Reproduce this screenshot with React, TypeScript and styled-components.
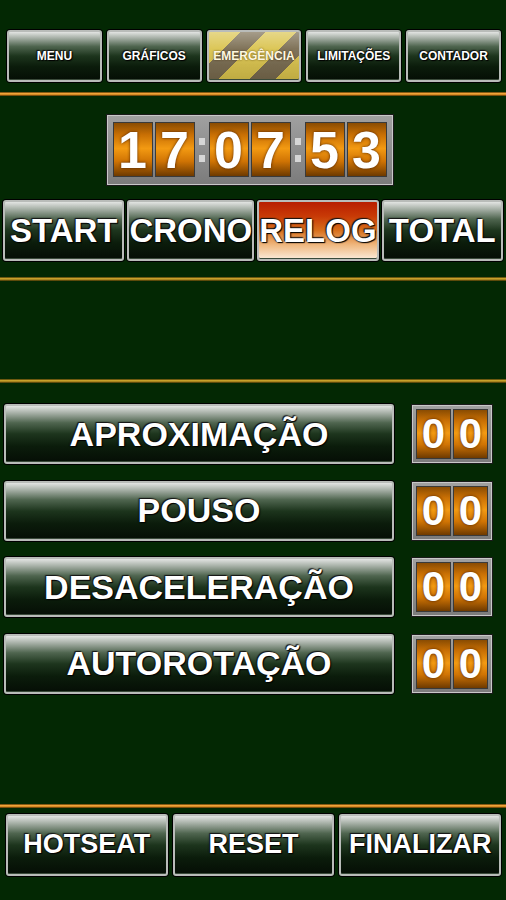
import React from "react";
import styled, { createGlobalStyle, css } from "styled-components";

const Global = createGlobalStyle`
  html, body { margin: 0; padding: 0; background: #032803; }
  body { font-family: "Liberation Sans", Arial, sans-serif; }
  * { box-sizing: border-box; }
`;

const Page = styled.div`
  width: 506px;
  height: 900px;
  background: #032803;
  display: flex;
  flex-direction: column;
  padding-top: 30px;
  overflow: hidden;
`;

const glossBg = css`
  background: linear-gradient(
    to bottom,
    #e2e4e2 0%,
    #a9b2a9 12%,
    #4f654f 30%,
    #1d351d 50%,
    #0b1c0b 72%,
    #050e05 100%
  );
`;

type Variant = "normal" | "hazard" | "active";

const Btn = styled.div<{ $variant?: Variant; $size: number }>`
  flex: 1;
  display: flex;
  align-items: center;
  justify-content: center;
  border: 2px solid #b9bcb9;
  border-radius: 3px;
  box-shadow: 0 0 0 1px #000, inset 0 -1px 0 #3a4a3a;
  color: #fff;
  font-weight: 700;
  font-size: ${(p) => p.$size}px;
  white-space: nowrap;
  text-shadow: 0 0 2px #000, 1px 1px 1px #000, -1px -1px 1px #1a1a1a;
  ${(p) =>
    p.$variant === "hazard"
      ? css`
          color: #fff8e0;
          text-shadow: 0 0 2px rgba(60, 40, 0, 0.8);
          background: linear-gradient(to bottom, rgba(255,255,255,0.35) 0%, rgba(255,255,255,0.08) 35%, rgba(0,0,0,0.12) 100%),
            repeating-linear-gradient(135deg, #d9c24a 0px, #d9c24a 22px, #76684c 22px, #76684c 40px);
        `
      : p.$variant === "active"
      ? css`
          background: linear-gradient(to bottom, #b81e00 0%, #c83a06 25%, #d8701c 50%, #efb77e 75%, #fbead8 100%);
        `
      : glossBg}
`;

const TopNav = styled.div`
  display: flex;
  gap: 5px;
  height: 52px;
  padding: 0 5px 0 7px;
`;

const Separator = styled.div<{ $top: number; $tone: "orange" | "gold" }>`
  margin-top: ${(p) => p.$top}px;
  height: 4px;
  flex-shrink: 0;
  background: ${(p) =>
    p.$tone === "orange"
      ? "linear-gradient(to bottom, #4a3000 0%, #f2a53a 35%, #d08420 70%, #3a2600 100%)"
      : "linear-gradient(to bottom, #3a3000 0%, #c9a32c 35%, #a07e1c 70%, #2e2600 100%)"};
`;

const ClockWrap = styled.div`
  margin-top: 19px;
  display: flex;
  justify-content: center;
  padding-right: 7px;
`;

const Frame = styled.div<{ $pad: string }>`
  display: flex;
  align-items: stretch;
  padding: ${(p) => p.$pad};
  background: linear-gradient(to bottom, #a0a0a0, #7c7c7c);
  border: 1px solid #c8c8c8;
  box-shadow: 0 0 0 1px #1a1a1a;
  gap: 2px;
`;

const DigitCell = styled.div<{ $w: number; $h: number; $size: number }>`
  width: ${(p) => p.$w}px;
  height: ${(p) => p.$h}px;
  display: flex;
  align-items: center;
  justify-content: center;
  border: 1px solid #3a3a3a;
  background: linear-gradient(
    to bottom,
    #8a4c02 0%,
    #c86f04 22%,
    #f39a12 48%,
    #d07404 72%,
    #6e3a00 100%
  );
  color: #fff;
  font-weight: 700;
  font-size: ${(p) => p.$size}px;
  line-height: 1;
  text-shadow: 0 0 3px rgba(60, 20, 0, 0.9);
`;

const Colon = styled.div`
  width: 10px;
  display: flex;
  flex-direction: column;
  align-items: center;
  justify-content: center;
  gap: 10px;
  &::before,
  &::after {
    content: "";
    width: 6px;
    height: 7px;
    background: #d6d6d6;
  }
`;

const ModeRow = styled.div`
  margin-top: 15px;
  display: flex;
  gap: 3px;
  height: 61px;
  padding: 0 3px;
`;

const Spacer = styled.div<{ $h: number }>`
  height: ${(p) => p.$h}px;
  flex-shrink: 0;
`;

const Rows = styled.div`
  margin-top: 21px;
  display: flex;
  flex-direction: column;
  gap: 16.5px;
`;

const Row = styled.div`
  display: flex;
  align-items: center;
  gap: 18px;
  height: 60px;
  padding-left: 4px;
`;

const RowBtn = styled(Btn)`
  flex: 0 0 390px;
  height: 60px;
`;

const BottomRow = styled.div`
  margin-top: 6px;
  display: flex;
  gap: 5px;
  height: 62px;
  padding: 0 5px 0 6px;
`;

const Clock = ({ time }: { time: string }) => {
  const [h, m, s] = time.split(":");
  const pair = (v: string) =>
    v.split("").map((d, i) => (
      <DigitCell key={i} $w={40} $h={55} $size={52}>
        {d}
      </DigitCell>
    ));
  return (
    <Frame $pad="6px 5px 7px 5px">
      {pair(h)}
      <Colon />
      {pair(m)}
      <Colon />
      {pair(s)}
    </Frame>
  );
};

const Counter = ({ value }: { value: string }) => (
  <Frame $pad="3px 3px">
    {value.split("").map((d, i) => (
      <DigitCell key={i} $w={35} $h={50} $size={42}>
        {d}
      </DigitCell>
    ))}
  </Frame>
);

const nav: { label: string; variant?: Variant }[] = [
  { label: "MENU" },
  { label: "GRÁFICOS" },
  { label: "EMERGÊNCIA", variant: "hazard" },
  { label: "LIMITAÇÕES" },
  { label: "CONTADOR" },
];

const modes: { label: string; variant?: Variant }[] = [
  { label: "START" },
  { label: "CRONO" },
  { label: "RELOG", variant: "active" },
  { label: "TOTAL" },
];

const phases = ["APROXIMAÇÃO", "POUSO", "DESACELERAÇÃO", "AUTOROTAÇÃO"];

export default function App() {
  return (
    <>
      <Global />
      <Page>
        <TopNav>
          {nav.map((n) => (
            <Btn key={n.label} $variant={n.variant} $size={12}>
              {n.label}
            </Btn>
          ))}
        </TopNav>
        <Separator $top={10} $tone="orange" />
        <ClockWrap>
          <Clock time="17:07:53" />
        </ClockWrap>
        <ModeRow>
          {modes.map((m) => (
            <Btn key={m.label} $variant={m.variant} $size={33}>
              {m.label}
            </Btn>
          ))}
        </ModeRow>
        <Separator $top={16} $tone="gold" />
        <Spacer $h={98} />
        <Separator $top={0} $tone="gold" />
        <Rows>
          {phases.map((p) => (
            <Row key={p}>
              <RowBtn $size={34}>{p}</RowBtn>
              <Counter value="00" />
            </Row>
          ))}
        </Rows>
        <Separator $top={110} $tone="orange" />
        <BottomRow>
          <Btn $size={27}>HOTSEAT</Btn>
          <Btn $size={27}>RESET</Btn>
          <Btn $size={27}>FINALIZAR</Btn>
        </BottomRow>
      </Page>
    </>
  );
}
